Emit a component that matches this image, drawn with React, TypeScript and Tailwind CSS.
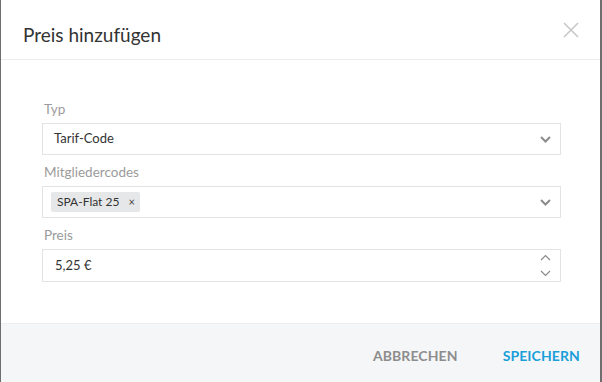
import React, { useState } from 'react';

const font = { fontFamily: 'Lato, "Open Sans", sans-serif' };

const Chevron: React.FC<{ up?: boolean; thin?: boolean }> = ({ up, thin }) => (
  <svg width="11" height="7" viewBox="0 0 11 7" className="block">
    <path
      d={up ? 'M1 6 L5.5 1.5 L10 6' : 'M1 1 L5.5 5.5 L10 1'}
      fill="none"
      stroke={thin ? '#8a8a8a' : '#8c8c8c'}
      strokeWidth={thin ? 1.2 : 2}
    />
  </svg>
);

const Field: React.FC<{ label: string; children: React.ReactNode; className?: string }> = ({ label, children, className }) => (
  <div className={className}>
    <div className="pl-[2px] h-[18px] leading-[18px] text-[13.5px] text-[#9b9b9b] mb-[5px]">{label}</div>
    {children}
  </div>
);

export default function App() {
  const [codes, setCodes] = useState<string[]>(['SPA-Flat 25']);
  const [price, setPrice] = useState('5,25 €');

  return (
    <div className="w-[602px] h-[382px] overflow-hidden bg-[#6e6e6e] flex" style={font}>
      <div className="ml-[1px] w-[599px] h-full bg-white flex flex-col">
        {/* header */}
        <div className="h-[60px] border-b border-[#ececec] flex items-start justify-between pl-[22px] pr-[21px]">
          <h2 className="pt-[23px] text-[19px] leading-[24px] text-[#333]">Preis hinzufügen</h2>
          <button className="mt-[22px] text-[#c8c8c8]">
            <svg width="16" height="16" viewBox="0 0 16 16" className="block">
              <path d="M1 1 L15 15 M15 1 L1 15" stroke="currentColor" strokeWidth="1.6" fill="none" />
            </svg>
          </button>
        </div>

        {/* body */}
        <div className="flex-1 pt-[40px] pl-[41px] pr-[39px]">
          <Field label="Typ">
            <div className="h-[32px] border border-[#e3e3e3] flex items-center justify-between pl-[11px] pr-[9px] text-[13px] text-[#333]">
              <span>Tarif-Code</span>
              <Chevron />
            </div>
          </Field>

          <Field label="Mitgliedercodes" className="mt-[8px]">
            <div className="h-[32px] border border-[#e3e3e3] flex items-center justify-between pl-[8px] pr-[9px] text-[12px] text-[#333]">
              <div className="flex gap-1">
                {codes.map((c) => (
                  <span key={c} className="h-[20px] bg-[#e6e7e9] rounded-[2px] flex items-center pl-[6px] pr-[5px] gap-[9px]">
                    {c}
                    <button className="text-[11px] text-[#444]" onClick={() => setCodes(codes.filter((x) => x !== c))}>×</button>
                  </span>
                ))}
              </div>
              <Chevron />
            </div>
          </Field>

          <Field label="Preis" className="mt-[8px]">
            <div className="h-[33px] border border-[#e3e3e3] flex items-center justify-between pl-[12px] pr-[9px]">
              <input
                value={price}
                onChange={(e) => setPrice(e.target.value)}
                className="outline-none text-[13px] text-[#333] bg-transparent w-[200px]"
                style={font}
              />
              <div className="flex flex-col gap-[9px]">
                <Chevron up thin />
                <Chevron thin />
              </div>
            </div>
          </Field>
        </div>

        {/* footer */}
        <div className="h-[59px] bg-[#f5f6f8] border-t border-[#eceef0] flex items-center justify-end pr-[20px] gap-[45px] pt-[4px]">
          <button className="text-[14px] font-bold tracking-[0.1px] text-[#8d8d8d]">ABBRECHEN</button>
          <button className="text-[14px] font-bold tracking-[0.1px] text-[#1a9fd9]">SPEICHERN</button>
        </div>
      </div>
    </div>
  );
}
